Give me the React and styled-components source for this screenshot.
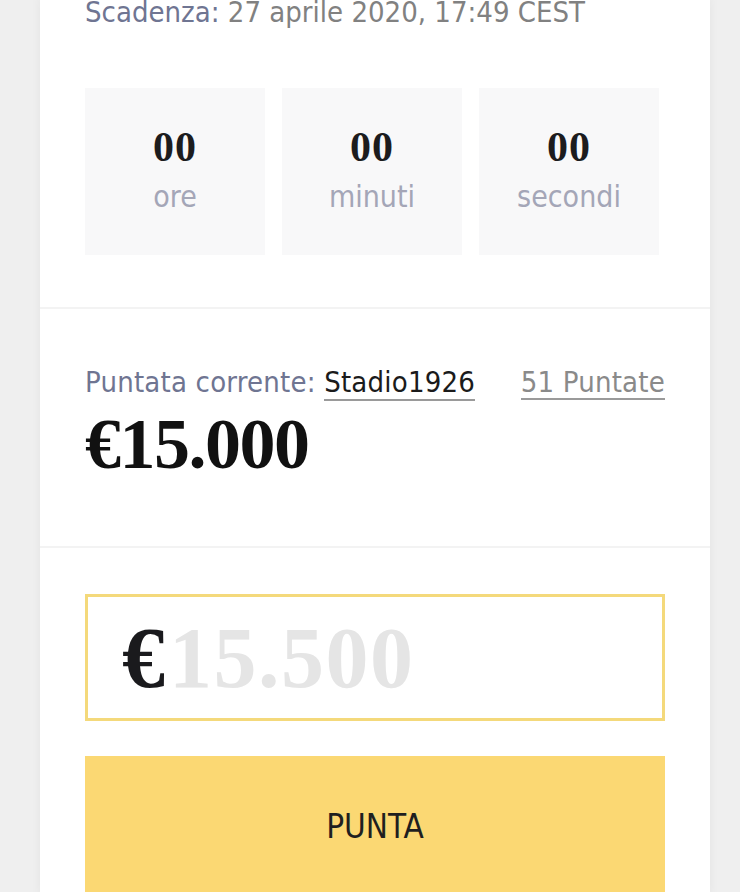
import React from 'react';
import styled, {createGlobalStyle} from 'styled-components';

const GlobalStyle = createGlobalStyle`
body {
    margin: 0;
    background: #efefef;
    font-family: "DejaVu Sans Condensed", "Open Sans", sans-serif;
}
`

const sans = `"DejaVu Sans Condensed", "Open Sans", sans-serif`;
const serif = `"Liberation Serif", "DejaVu Serif", serif`;

export default function App() {
    const units = [
        {value: '00', label: 'ore'},
        {value: '00', label: 'minuti'},
        {value: '00', label: 'secondi'},
    ];

    return (
        <React.Fragment>
            <GlobalStyle />
            <Page>
                <Card>
                    <Section $top>
                        <Deadline>
                            <Muted>Scadenza:</Muted> 27 aprile 2020, 17:49 CEST
                        </Deadline>
                        <Countdown>
                            {units.map((u) => (
                                <TimeBox key={u.label}>
                                    <TimeValue>{u.value}</TimeValue>
                                    <TimeLabel>{u.label}</TimeLabel>
                                </TimeBox>
                            ))}
                        </Countdown>
                    </Section>

                    <Section $bid>
                        <BidRow>
                            <span>
                                <Muted>Puntata corrente: </Muted>
                                <UserLink href="#">Stadio1926</UserLink>
                            </span>
                            <CountLink href="#">51 Puntate</CountLink>
                        </BidRow>
                        <Price>€15.000</Price>
                    </Section>

                    <Section $form>
                        <AmountField>
                            <Currency>€</Currency>
                            <AmountInput placeholder="15.500" />
                        </AmountField>
                        <BidButton>PUNTA</BidButton>
                    </Section>
                </Card>
            </Page>
        </React.Fragment>
    )
}

const Page = styled.div`
padding: 0 30px 0 40px;
`

const Card = styled.div`
background: #fff;
box-shadow: 0 0 10px rgba(0, 0, 0, 0.05);
min-height: 892px;
`

const Section = styled.div`
padding: ${p => p.$top ? '0 45px 52px' : p.$bid ? '57px 45px 64px' : '46px 45px 0'};
border-bottom: ${p => p.$form ? 'none' : '2px solid #f3f3f3'};
`

const Deadline = styled.div`
font-family: ${sans};
font-size: 29px;
line-height: 30px;
margin-top: -3px;
color: #818181;
`

const Muted = styled.span`
color: #6f7592;
`

const Countdown = styled.div`
display: grid;
grid-template-columns: repeat(3, 180px);
gap: 17px;
margin-top: 61px;
`

const TimeBox = styled.div`
background: #f8f8f9;
height: 167px;
display: flex;
flex-direction: column;
align-items: center;
justify-content: center;
`

const TimeValue = styled.div`
font-family: ${serif};
font-weight: bold;
font-size: 42px;
line-height: 44px;
letter-spacing: 1px;
color: #1c1c1e;
margin-top: -6px;
`

const TimeLabel = styled.div`
font-family: ${sans};
font-size: 30px;
line-height: 32px;
margin-top: 12px;
color: #a4a6b7;
`

const BidRow = styled.div`
display: flex;
justify-content: space-between;
align-items: baseline;
font-family: ${sans};
font-size: 29px;
line-height: 32px;
letter-spacing: 0.2px;
`

const UserLink = styled.a`
color: #1b1b1b;
text-decoration: none;
border-bottom: 2px solid #9a9a9a;
`

const CountLink = styled.a`
color: #8a8a8a;
text-decoration: none;
border-bottom: 2px solid #9a9a9a;
`

const Price = styled.div`
font-family: ${serif};
font-weight: bold;
font-size: 72px;
line-height: 76px;
letter-spacing: -1.5px;
color: #111;
margin-top: 6px;
`

const AmountField = styled.label`
display: flex;
align-items: center;
height: 121px;
border: 3px solid #f4d97b;
padding: 0 34px;
`

const Currency = styled.span`
font-family: ${serif};
font-weight: bold;
font-size: 86px;
color: #1a1a1d;
`

const AmountInput = styled.input`
flex: 1;
min-width: 0;
border: none;
outline: none;
background: transparent;
font-family: ${serif};
font-weight: bold;
font-size: 86px;
letter-spacing: 1.5px;
color: #1a1a1d;
padding: 0 0 0 4px;
&::placeholder {
    color: #e5e5e5;
}
`

const BidButton = styled.button`
display: block;
width: 100%;
height: 140px;
margin-top: 35px;
border: none;
background: #fbd873;
font-family: ${sans};
font-size: 33px;
color: #1f1f1f;
cursor: pointer;
`
